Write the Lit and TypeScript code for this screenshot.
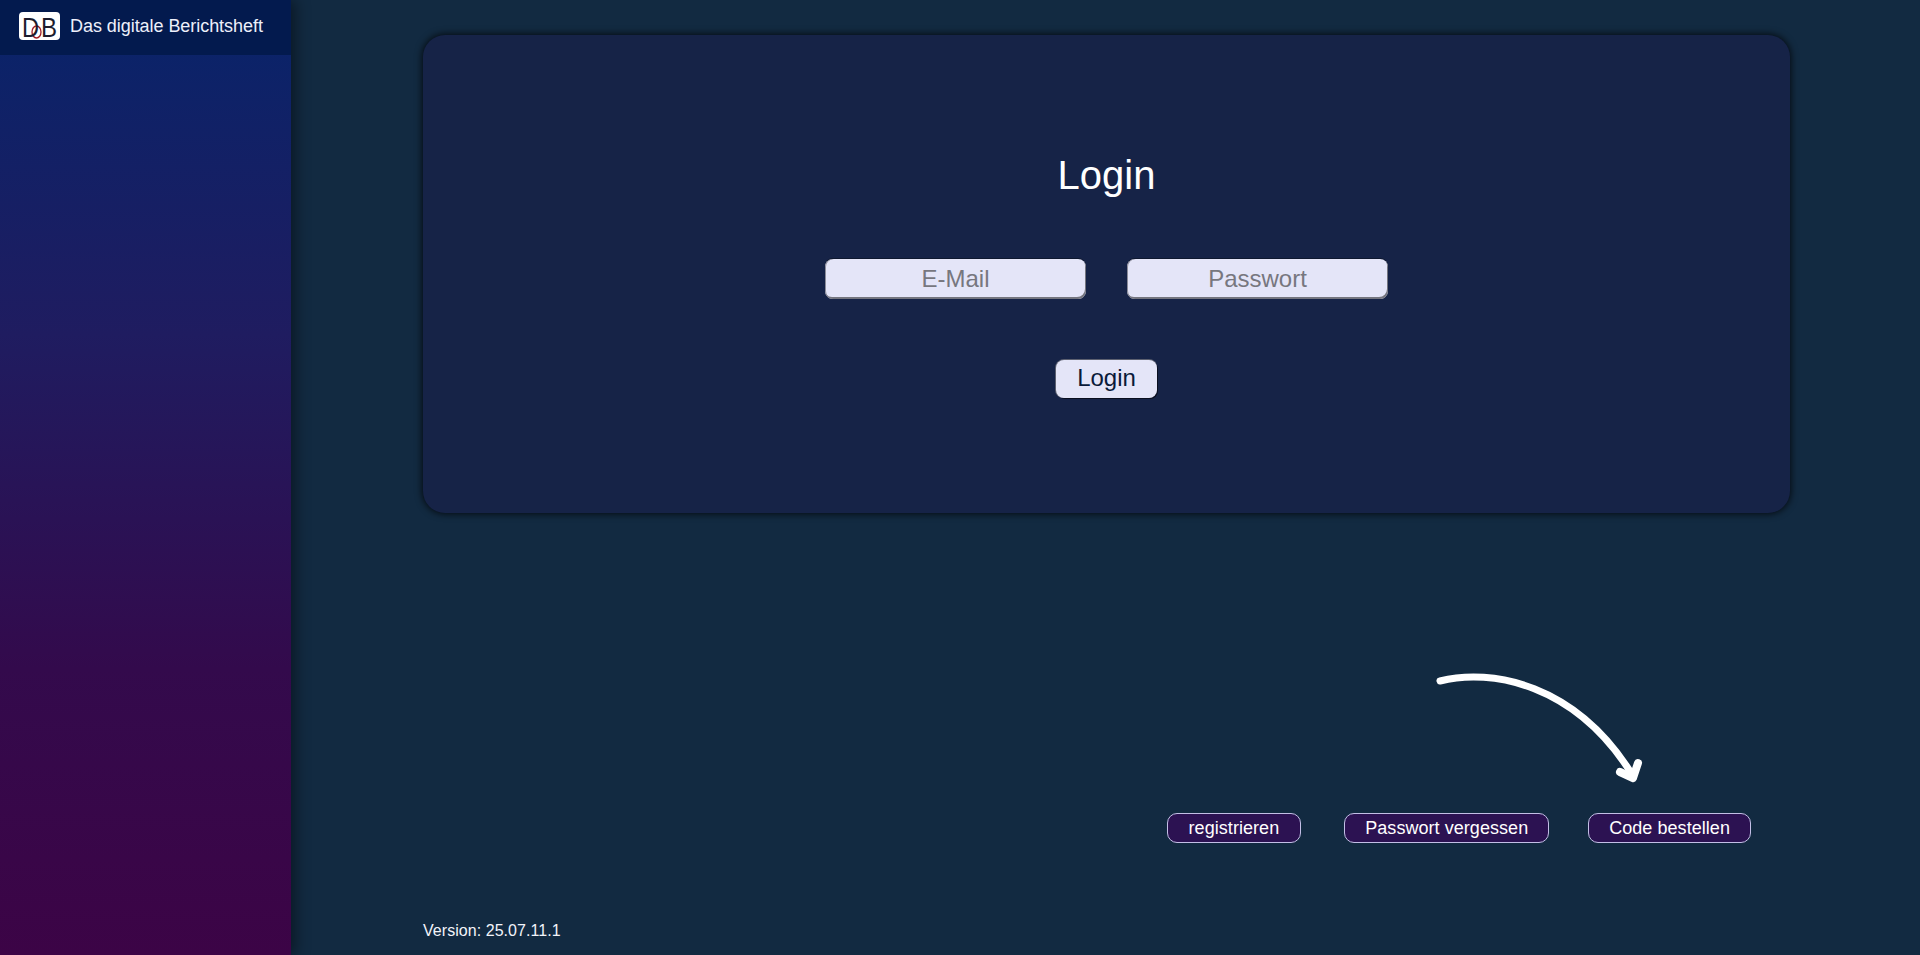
import { LitElement, html, css } from "lit";
import { customElement } from "lit/decorators.js";

@customElement("app-root")
export class AppRoot extends LitElement {
  static styles = css`
    :host {
      display: grid;
      grid-template-columns: 291px 1fr;
      height: 100vh;
      overflow: hidden;
      font-family: "Liberation Sans", Arial, sans-serif;
      background: #122a41;
      color: #fff;
    }
    .side {
      background: linear-gradient(180deg, #08246a 0%, #1f1c60 35%, #330a4c 70%, #3c0446 100%);
      box-shadow: 4px 0 14px rgba(0, 0, 0, 0.45);
      position: relative;
      z-index: 1;
    }
    .head {
      height: 55px;
      background: #031a4e;
      display: flex;
      align-items: center;
      gap: 9px;
      padding: 0 0 3px 19px;
      box-sizing: border-box;
      font-size: 18px;
      letter-spacing: -0.05px;
      color: #eef0fb;
      white-space: nowrap;
    }
    .logo { width: 42px; height: 29px; flex: none; display: block; overflow: visible; }
    .main {
      position: relative;
      display: flex;
      flex-direction: column;
      padding: 35px 130px 0 132px;
      min-width: 0;
    }
    .card {
      height: 478px;
      background: #162347;
      border-radius: 22px;
      box-shadow: 0 0 7px 1px rgba(0, 0, 0, 0.75);
      display: flex;
      flex-direction: column;
      align-items: center;
      padding-top: 117px;
      box-sizing: border-box;
    }
    h1 {
      margin: 0;
      font-weight: 400;
      font-size: 40px;
      line-height: 46px;
      color: #fff;
    }
    .fields {
      display: flex;
      gap: 40.5px;
      margin-top: 61px;
    }
    input {
      width: 261.5px;
      height: 40px;
      box-sizing: border-box;
      border: none;
      border-radius: 8px;
      background: #e4e5f8;
      box-shadow: inset -1px -2px 0 #74757f, inset 1px 0 0 #8b8c99, 0 -1px 0 #0e1830;
      font: 24px "Liberation Sans", Arial, sans-serif;
      text-align: center;
      padding: 0;
      outline: none;
    }
    input::placeholder { color: #77777f; opacity: 1; }
    .btn {
      margin-top: 61px;
      width: 101px;
      height: 38px;
      box-sizing: border-box;
      border: none;
      border-radius: 8px;
      background: #e4e5f8;
      box-shadow: 0 -1px 0 0 #5c6070, -1px 0 0 0 #5c6070, 1px 1px 0 0 #0a0f20;
      font: 24px "Liberation Sans", Arial, sans-serif;
      color: #0a1a3a;
      padding: 0 0 2px;
    }
    .links {
      display: flex;
      justify-content: flex-end;
      gap: 39px;
      margin-top: 300px;
      padding-right: 39px;
    }
    .link {
      height: 30px;
      box-sizing: border-box;
      border: 1px solid #c3bfe6;
      border-radius: 10px;
      background: #2c1252;
      color: #fff;
      font: 18px "Liberation Sans", Arial, sans-serif;
      letter-spacing: 0.05px;
      padding: 0 20px;
      white-space: nowrap;
    }
    .link.first { margin-right: 4px; padding: 0 21px; }
    .version {
      margin-top: 79px;
      font-size: 16px;
      line-height: 18px;
      letter-spacing: 0.05px;
      color: #f2f4fa;
    }
    .arrow {
      position: absolute;
      left: 1140px;
      top: 668px;
      width: 220px;
      height: 120px;
    }
  `;

  render() {
    return html`
      <aside class="side">
        <div class="head">
          <svg class="logo" viewBox="0 0 42 29">
            <rect x="0" y="0" width="41" height="28" rx="4" fill="#fff"/>
            <ellipse cx="17.5" cy="20" rx="4.5" ry="6" fill="none" stroke="#a01c24" stroke-width="1.3"/>
            <text x="3" y="25" font-family="Liberation Sans" font-size="28" textLength="17" lengthAdjust="spacingAndGlyphs" fill="#1c1c2e">D</text>
            <text x="22" y="25" font-family="Liberation Sans" font-size="28" textLength="16" lengthAdjust="spacingAndGlyphs" fill="#1c1c2e">B</text>
          </svg>
          <span>Das digitale Berichtsheft</span>
        </div>
      </aside>
      <main class="main">
        <section class="card">
          <h1>Login</h1>
          <div class="fields">
            <input type="text" placeholder="E-Mail" />
            <input type="password" placeholder="Passwort" />
          </div>
          <button class="btn">Login</button>
        </section>
        <div class="links">
          <button class="link first">registrieren</button>
          <button class="link">Passwort vergessen</button>
          <button class="link">Code bestellen</button>
        </div>
        <div class="version">Version: 25.07.11.1</div>
        <svg class="arrow" viewBox="0 0 220 120" fill="none" stroke="#fff" stroke-linecap="round" stroke-linejoin="round">
          <path d="M9 13 C 60 0, 145 15, 202 108" stroke-width="7"/>
          <path d="M189 104 L 202 110 L 207 95" stroke-width="8"/>
        </svg>
      </main>
    `;
  }
}
